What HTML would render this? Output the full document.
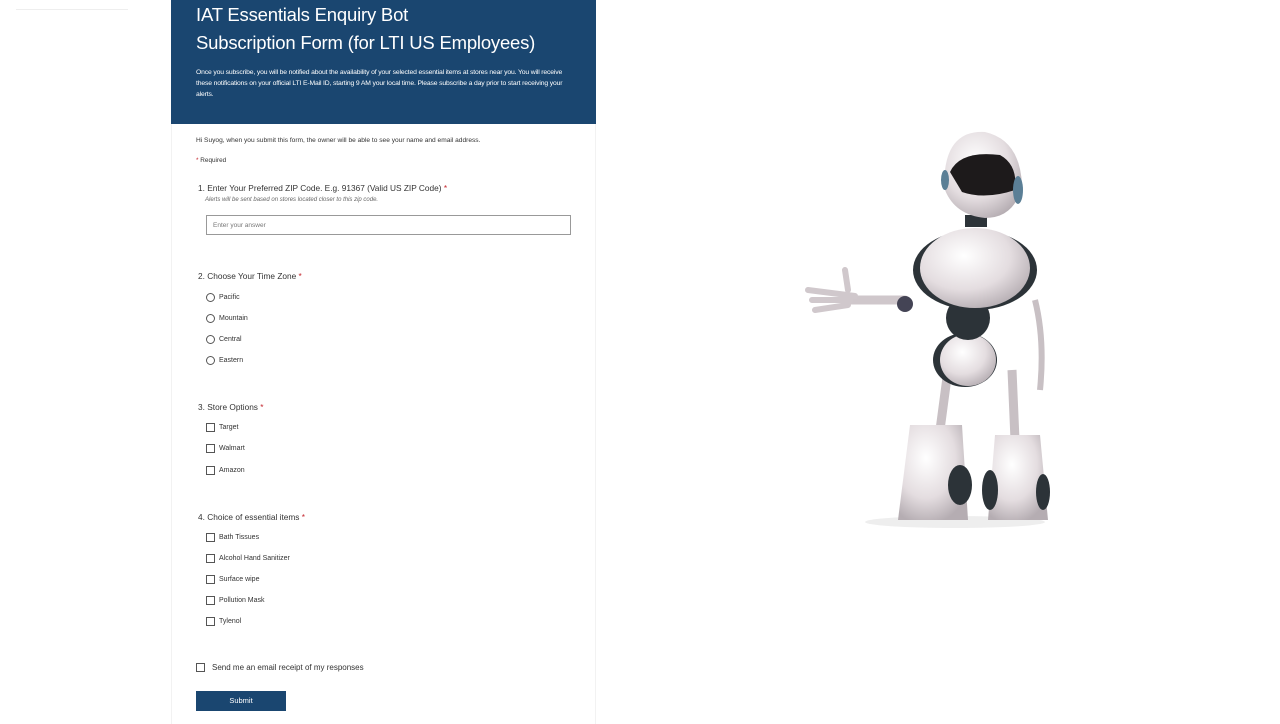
<!DOCTYPE html>
<html><head><meta charset="utf-8"><style>
*{margin:0;padding:0;box-sizing:border-box}
body{width:1280px;height:720px;background:#fff;font-family:"Liberation Sans",sans-serif;position:relative;overflow:hidden;color:#333}
.a{position:absolute;white-space:nowrap}
.hdr{position:absolute;left:171px;top:0;width:425px;height:124px;background:#1a4670;color:#fff}
.form{position:absolute;left:171px;top:124px;width:425px;height:600px;border-left:1px solid #f2f2f2;border-right:1px solid #f2f2f2}
.q{font-size:8.3px;color:#333}
.o{font-size:7px;color:#333}
.rad{position:absolute;width:9px;height:9px;border:1px solid #555;border-radius:50%}
.chk{position:absolute;width:9px;height:9px;border:1px solid #555}
.st{color:#c4262e}
</style></head><body>
<div class="a" style="left:16px;top:9px;width:112px;border-top:1px solid #eee"></div>
<div class="hdr">
<div class="a" style="left:25px;top:4px;font-size:18.5px;letter-spacing:-0.2px">IAT Essentials Enquiry Bot</div>
<div class="a" style="left:25px;top:32px;font-size:18.5px;letter-spacing:-0.2px">Subscription Form (for LTI US Employees)</div>
<div class="a" style="left:25px;top:67px;font-size:6.8px;line-height:11px;white-space:normal;width:378px;letter-spacing:-0.15px">Once you subscribe, you will be notified about the availability of your selected essential items at stores near you. You will receive these notifications on your official LTI E-Mail ID, starting 9 AM your local time. Please subscribe a day prior to start receiving your alerts.</div>
</div>
<div class="a o" style="left:196px;top:137px;font-size:6.6px">Hi Suyog, when you submit this form, the owner will be able to see your name and email address.</div>
<div class="a o" style="left:196px;top:157px;font-size:6.4px"><span class="st">*</span> Required</div>
<div class="a q" style="left:198px;top:183px">1. Enter Your Preferred ZIP Code. E.g. 91367 (Valid US ZIP Code) <span class="st">*</span></div>
<div class="a" style="left:205px;top:197px;font-size:6px;font-style:italic;color:#666">Alerts will be sent based on stores located closer to this zip code.</div>
<div class="a" style="left:206px;top:215px;width:365px;height:20px;border:1px solid #999;font-size:6.5px;color:#777;padding:6px 0 0 6px">Enter your answer</div>
<div class="a q" style="left:198px;top:271px">2. Choose Your Time Zone <span class="st">*</span></div>
<div class="rad" style="left:206px;top:293px"></div><div class="a o" style="left:219px;top:294px">Pacific</div>
<div class="rad" style="left:206px;top:314px"></div><div class="a o" style="left:219px;top:315px">Mountain</div>
<div class="rad" style="left:206px;top:335px"></div><div class="a o" style="left:219px;top:336px">Central</div>
<div class="rad" style="left:206px;top:356px"></div><div class="a o" style="left:219px;top:357px">Eastern</div>
<div class="a q" style="left:198px;top:402px">3. Store Options <span class="st">*</span></div>
<div class="chk" style="left:206px;top:423px"></div><div class="a o" style="left:219px;top:424px">Target</div>
<div class="chk" style="left:206px;top:444px"></div><div class="a o" style="left:219px;top:445px">Walmart</div>
<div class="chk" style="left:206px;top:466px"></div><div class="a o" style="left:219px;top:467px">Amazon</div>
<div class="a q" style="left:198px;top:512px">4. Choice of essential items <span class="st">*</span></div>
<div class="chk" style="left:206px;top:533px"></div><div class="a o" style="left:219px;top:534px">Bath Tissues</div>
<div class="chk" style="left:206px;top:554px"></div><div class="a o" style="left:219px;top:555px">Alcohol Hand Sanitizer</div>
<div class="chk" style="left:206px;top:575px"></div><div class="a o" style="left:219px;top:576px">Surface wipe</div>
<div class="chk" style="left:206px;top:596px"></div><div class="a o" style="left:219px;top:597px">Pollution Mask</div>
<div class="chk" style="left:206px;top:617px"></div><div class="a o" style="left:219px;top:618px">Tylenol</div>
<div class="chk" style="left:196px;top:663px"></div><div class="a" style="left:212px;top:663px;font-size:8px">Send me an email receipt of my responses</div>
<div class="a" style="left:196px;top:691px;width:90px;height:20px;background:#1a4670;color:#fff;font-size:7.5px;text-align:center;line-height:20px">Submit</div>
<div class="form"></div>
<svg class="a" style="left:790px;top:120px" width="280" height="420" viewBox="790 120 280 420">
<defs><radialGradient id="w" cx="40%" cy="35%" r="70%"><stop offset="0" stop-color="#fff"/><stop offset="0.6" stop-color="#e4dde0"/><stop offset="1" stop-color="#b5adb2"/></radialGradient></defs>
<ellipse cx="955" cy="522" rx="90" ry="6" fill="#eee"/>
<path d="M948 370 L940 430 M1012 370 L1015 440" stroke="#c8c0c4" stroke-width="9"/>
<path d="M1035 300 Q1045 340 1040 390" stroke="#c8c0c4" stroke-width="6" fill="none"/>
<path d="M910 425 L962 425 L968 520 L898 520 Z" fill="url(#w)"/>
<ellipse cx="960" cy="485" rx="12" ry="20" fill="#2c3338"/>
<path d="M995 435 L1040 435 L1048 520 L988 520 Z" fill="url(#w)"/>
<ellipse cx="990" cy="490" rx="8" ry="20" fill="#2c3338"/>
<ellipse cx="1043" cy="492" rx="7" ry="18" fill="#2c3338"/>
<path d="M905 300 L850 300" stroke="#cfc7cb" stroke-width="9" stroke-linecap="round"/>
<circle cx="905" cy="304" r="8" fill="#445"/>
<path d="M855 296 L808 290 M850 300 L812 300 M848 305 L815 310 M848 290 L845 270" stroke="#d0c8cc" stroke-width="6" stroke-linecap="round"/>
<ellipse cx="965" cy="360" rx="32" ry="27" fill="#2c3338"/>
<ellipse cx="968" cy="360" rx="28" ry="26" fill="url(#w)"/>
<ellipse cx="968" cy="318" rx="22" ry="22" fill="#2c3338"/>
<ellipse cx="975" cy="270" rx="62" ry="40" fill="#2c3338"/>
<ellipse cx="975" cy="268" rx="55" ry="40" fill="url(#w)"/>
<rect x="965" y="215" width="22" height="12" fill="#2c3338"/>
<path d="M945 170 Q950 130 985 132 Q1020 140 1022 185 Q1015 218 985 218 Q955 215 945 190 Z" fill="url(#w)"/>
<path d="M950 172 Q960 150 1000 155 Q1018 165 1015 190 Q985 200 962 192 Z" fill="#1d1a1b"/>
<ellipse cx="1018" cy="190" rx="5" ry="14" fill="#5b7f96"/>
<ellipse cx="945" cy="180" rx="4" ry="10" fill="#5b7f96"/>
</svg>
</body></html>
